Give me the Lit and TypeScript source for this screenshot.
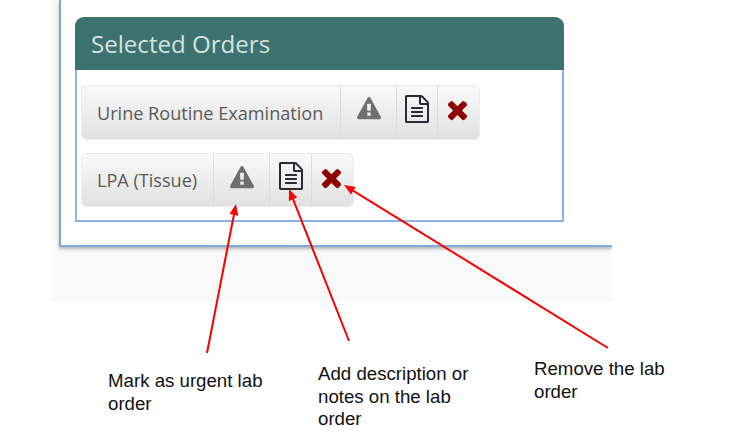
import { LitElement, html, css, svg } from "lit";
import { customElement } from "lit/decorators.js";

const WARN = "M1024 1375v-190q0-14-9.5-23.5t-22.5-9.5h-192q-13 0-22.5 9.5t-9.5 23.5v190q0 14 9.5 23.5t22.5 9.5h192q13 0 22.5-9.5t9.5-23.5zm-2-374l18-459q0-12-10-19-13-11-24-11h-220q-11 0-24 11-10 7-10 21l17 457q0 10 10 16.5t24 6.5h185q14 0 23.5-6.5t10.5-16.5zm-14-934l768 1408q35 63-2 126-17 29-46.5 46t-63.5 17h-1536q-34 0-63.5-17t-46.5-46q-37-63-2-126l768-1408q17-31 47-49t65-18 65 18 47 49z";
const FILE = "M1596 380q28 28 48 76t20 88v1152q0 40-28 68t-68 28h-1344q-40 0-68-28t-28-68v-1600q0-40 28-68t68-28h896q40 0 88 20t76 48zm-444-244v376h376q-10-29-22-41l-313-313q-12-12-41-22zm384 1528v-1024h-416q-40 0-68-28t-28-68v-416h-768v1536h1280zm-1024-864q0-14 9-23t23-9h704q14 0 23 9t9 23v64q0 14-9 23t-23 9h-704q-14 0-23-9t-9-23v-64zm736 224q14 0 23 9t9 23v64q0 14-9 23t-23 9h-704q-14 0-23-9t-9-23v-64q0-14 9-23t23-9h704zm0 256q14 0 23 9t9 23v64q0 14-9 23t-23 9h-704q-14 0-23-9t-9-23v-64q0-14 9-23t23-9h704z";
const TIMES = "M1490 1322q0 40-28 68l-136 136q-28 28-68 28t-68-28l-294-294-294 294q-28 28-68 28t-68-28l-136-136q-28-28-28-68t28-68l294-294-294-294q-28-28-28-68t28-68l136-136q28-28 68-28t68 28l294 294 294-294q28-28 68-28t68 28l136 136q28 28 28 68t-28 68l-294 294 294 294q28 28 28 68z";

const icon = (d: string, cls: string) => html`<svg class=${cls} viewBox="0 0 1792 1792"><path d=${d} fill="currentColor"></path></svg>`;

const arrows: [number, number, number, number][] = [
  [207, 353, 236, 204],
  [349, 341, 289, 189],
  [608, 348, 344, 185],
];

function arrow([x1, y1, x2, y2]: [number, number, number, number]) {
  const a = Math.atan2(y2 - y1, x2 - x1);
  const len = 11, w = 4.5;
  const bx = x2 - Math.cos(a) * len, by = y2 - Math.sin(a) * len;
  const nx = -Math.sin(a) * w, ny = Math.cos(a) * w;
  return svg`<line x1=${x1} y1=${y1} x2=${bx} y2=${by} stroke="#f70000" stroke-width="2"></line>
    <polygon points="${x2},${y2} ${bx + nx},${by + ny} ${bx - nx},${by - ny}" fill="#f70000"></polygon>`;
}

@customElement("app-root")
export class AppRoot extends LitElement {
  static styles = css`
    :host { display: block; position: relative; width: 745px; height: 438px; background: #fff; overflow: hidden; font-family: "Open Sans", sans-serif; }
    .shot { margin-left: 52px; width: 560px; height: 302px; padding-left: 7px; box-sizing: border-box; background: #f9f9f9; overflow: hidden; }
    .panel { height: 247px; box-sizing: border-box; background: #fff; border-left: 2px solid #7fa9dc; border-bottom: 2px solid #7fa9dc; box-shadow: 0 2px 3px rgba(0,0,0,.28); padding: 17px 48px 0 14px; }
    .card { height: 205px; box-sizing: border-box; border: 2px solid #8db4e8; border-top: none; border-radius: 9px 9px 0 0; }
    .head { height: 53px; margin: 0 -2px; box-sizing: border-box; padding-left: 16px; background: #3d7271; color: #d3e3df; font-size: 24.1px; line-height: 53px; border-radius: 9px 9px 0 0; }
    .body { padding: 15px 4px 0; display: flex; flex-direction: column; align-items: flex-start; gap: 13px; }
    .chip { display: flex; box-sizing: border-box; border: 1px solid #ececec; border-radius: 6px; background: linear-gradient(#f9f9f9, #e1e1e1); color: #5a5a5a; font-size: 18.1px; }
    .chip.a { height: 55px; } .chip.b { height: 54px; }
    .seg { display: flex; align-items: center; justify-content: center; box-sizing: border-box; border-left: 1px solid #dcdcdc; }
    .seg:first-child { border-left: none; justify-content: flex-start; padding-left: 15px; }
    .a .name { width: 258px; } .b .name { width: 131px; }
    .w { width: 56px; } .f { width: 41px; } .x { width: 42px; }
    .b .f { width: 42px; }
    .warn { width: 24px; height: 24px; color: #6f6f6f; }
    .doc { width: 28px; height: 28px; color: #2b2b33; }
    .times { width: 29px; height: 29px; color: #8f0000; }
    .a .warn { margin-top: -7px; } .a .doc { margin-top: -7px; } .a .times { margin: -6px 0 0 -3px; }
    .b .warn { margin-top: -4px; } .b .doc { margin-top: -8px; } .b .times { margin: -5px 0 0 -2px; }
    .over { position: absolute; inset: 0; width: 745px; height: 438px; }
    .note { position: absolute; font-family: "Liberation Sans", Arial, sans-serif; font-size: 18.67px; line-height: 23px; color: #111; white-space: pre-line; }
    .n1 { left: 108px; top: 369px; } .n2 { left: 318px; top: 363px; line-height: 22.5px; } .n3 { left: 534px; top: 357px; }
  `;

  row(cls: string, name: string) {
    return html`<div class="chip ${cls}">
      <div class="seg name">${name}</div>
      <div class="seg w">${icon(WARN, "warn")}</div>
      <div class="seg f">${icon(FILE, "doc")}</div>
      <div class="seg x">${icon(TIMES, "times")}</div>
    </div>`;
  }

  render() {
    return html`
      <div class="shot"><div class="panel"><div class="card">
        <div class="head">Selected Orders</div>
        <div class="body">
          ${this.row("a", "Urine Routine Examination")}
          ${this.row("b", "LPA (Tissue)")}
        </div>
      </div></div></div>
      <svg class="over" viewBox="0 0 745 438">${arrows.map(arrow)}</svg>
      <div class="note n1">Mark as urgent lab
order</div>
      <div class="note n2">Add description or
notes on the lab
order</div>
      <div class="note n3">Remove the lab
order</div>
    `;
  }
}
